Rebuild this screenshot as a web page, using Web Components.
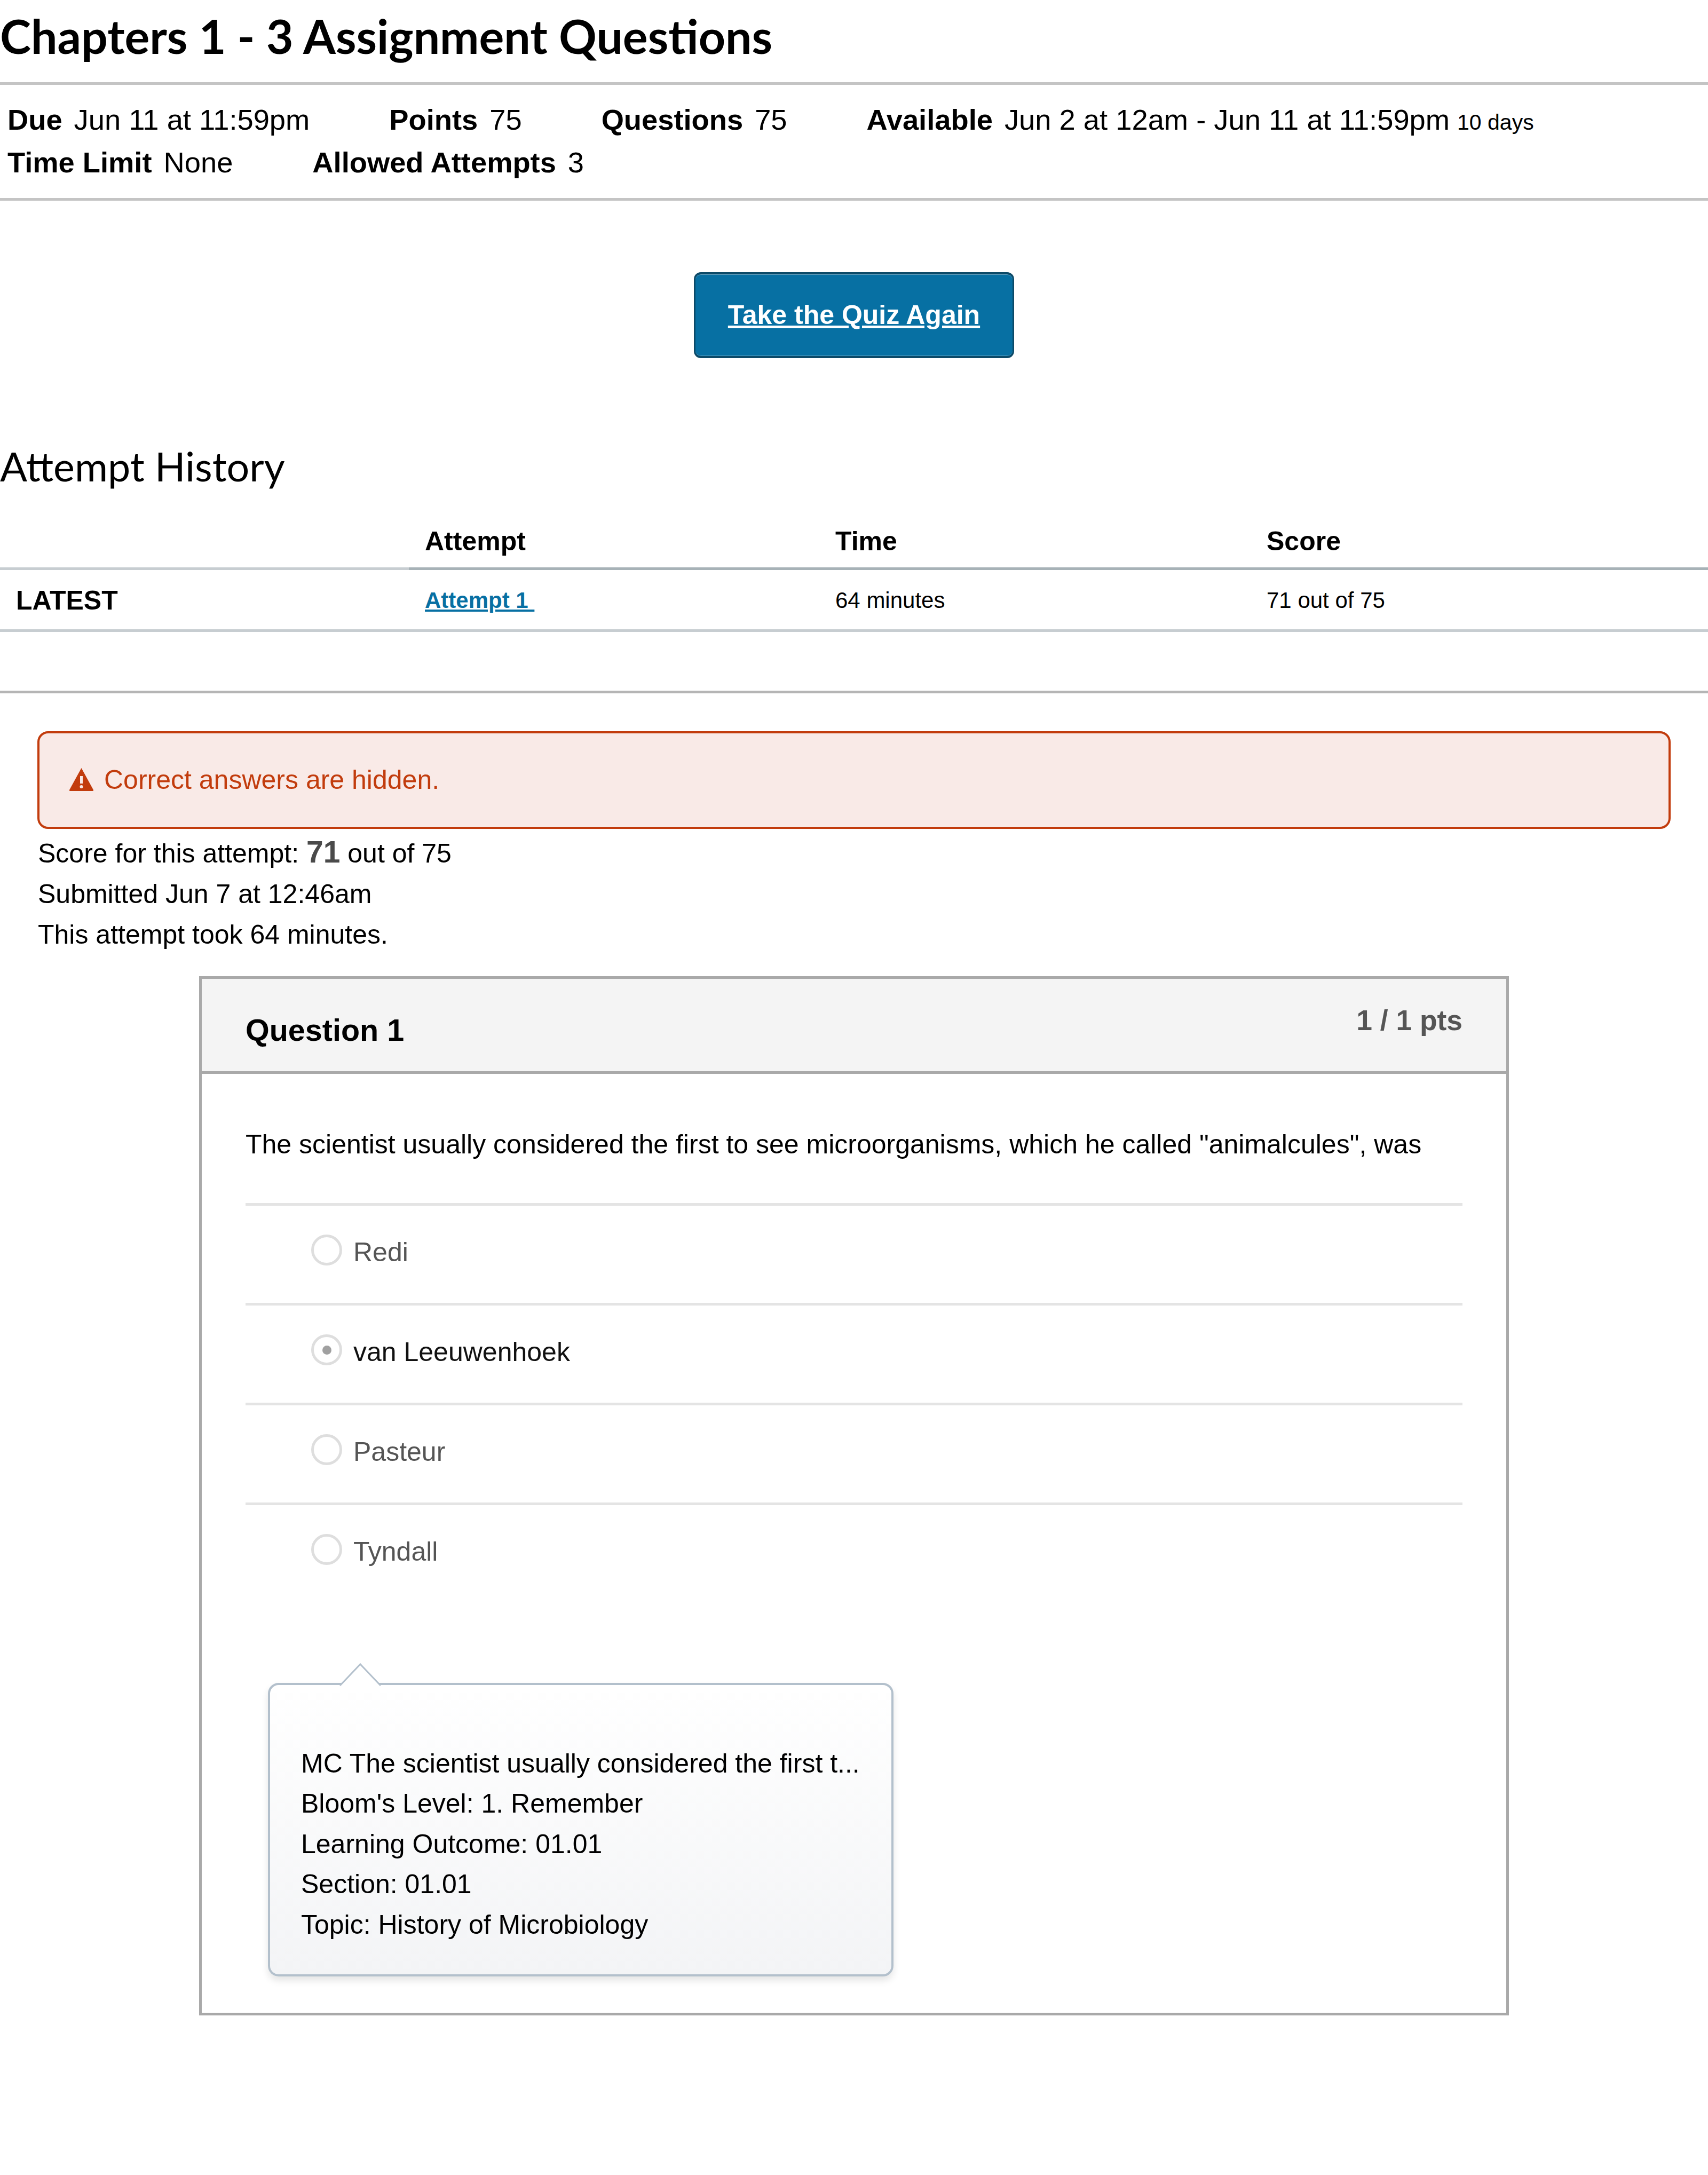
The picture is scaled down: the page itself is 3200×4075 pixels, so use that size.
<!DOCTYPE html>
<html>
<head>
<meta charset="utf-8">
<style>
  html, body { margin: 0; background: #fff; }
  body { font-family: "Liberation Sans", Arial, sans-serif; color: #000; width: 3200px; }
</style>
</head>
<body>
<quiz-header heading="Chapters 1 - 3 Assignment Questions"></quiz-header>
<quiz-action>Take the Quiz Again</quiz-action>
<attempt-history></attempt-history>
<quiz-alert>Correct answers are hidden.</quiz-alert>
<score-summary></score-summary>
<quiz-question number="1" pts="1 / 1 pts">
  <span slot="text">The scientist usually considered the first to see microorganisms, which he called "animalcules", was</span>
  <answer-option>Redi</answer-option>
  <answer-option selected>van Leeuwenhoek</answer-option>
  <answer-option>Pasteur</answer-option>
  <answer-option>Tyndall</answer-option>
  <question-comment slot="comment">
    <div>MC The scientist usually considered the first t...</div>
    <div>Bloom's Level: 1. Remember</div>
    <div>Learning Outcome: 01.01</div>
    <div>Section: 01.01</div>
    <div>Topic: History of Microbiology</div>
  </question-comment>
</quiz-question>

<script>
// helper: shadow root desde string
function mount(el, html){
  el.attachShadow({ mode: 'open' }).innerHTML = html;
}

class QuizHeader extends HTMLElement {
  connectedCallback(){
    mount(this, /* html */`
      <style>
        :host{ display:block; }
        h1{ margin:0; height:159px; padding-top:22px; box-sizing:border-box; font:700 87.7px/90px Lato, sans-serif; font-variant-ligatures:common-ligatures discretionary-ligatures; border-bottom:5px solid #c4c4c4; }
        .meta{ height:217px; box-sizing:border-box; padding:28px 14px 0; border-bottom:5px solid #c4c4c4; font-size:54.3px; line-height:75px; }
        .row{ display:flex; }
        .item{ white-space:pre; margin-right:149px; }
        b{ margin-right:22px; }
        small{ font-size:41px; margin-left:14px; }
      </style>
      <h1>${this.getAttribute('heading')}</h1>
      <div class="meta">
        <div class="row">
          <span class="item"><b>Due</b>Jun 11 at 11:59pm</span>
          <span class="item"><b>Points</b>75</span>
          <span class="item"><b>Questions</b>75</span>
          <span class="item"><b>Available</b>Jun 2 at 12am - Jun 11 at 11:59pm<small>10 days</small></span>
        </div>
        <div class="row">
          <span class="item"><b>Time Limit</b>None</span>
          <span class="item"><b>Allowed Attempts</b>3</span>
        </div>
      </div>`);
  }
}

class QuizAction extends HTMLElement {
  connectedCallback(){
    mount(this, /* html */`
      <style>
        :host{ display:flex; justify-content:center; padding-top:134px; }
        a{ display:flex; align-items:center; justify-content:center; box-sizing:border-box; width:600px; height:161px; padding-bottom:2px;
           background:#0770a3; border:1px solid #0c4a68; border-width:4px 3px; border-radius:13px; box-shadow:inset 0 1px 0 rgba(255,255,255,.4), inset 0 -1px 0 rgba(255,255,255,.3);
           color:#fff; font-weight:700; font-size:50px; text-decoration:underline; }
      </style>
      <a href="#"><slot></slot></a>`);
  }
}

class AttemptHistory extends HTMLElement {
  connectedCallback(){
    mount(this, /* html */`
      <style>
        :host{ display:block; padding-top:152px; }
        h2{ margin:0; font:400 75.4px/100px Lato, sans-serif; height:100px; }
        .head, .row{ display:grid; grid-template-columns:766px 769px 808px 1fr; }
        .head{ height:137px; margin-top:8px; font-weight:700; font-size:50px; line-height:60px; }
        .head span{ display:flex; align-items:flex-end; padding:0 0 19px 30px; border-bottom:5px solid #a7b2b7; }
        .head span:first-child{ border-bottom-color:#c7cdd1; }
        .row{ height:116px; padding-top:2px; align-items:center; font-size:42px; border-bottom:5px solid #c7cdd1; box-sizing:border-box; }
        .row span{ padding-left:30px; }
        .row .latest{ font-weight:700; font-size:50px; }
        a{ color:#0770a3; font-weight:700; text-decoration:underline; white-space:pre; }
        hr{ margin:110px 0 0; border:0; border-top:5px solid #b5b5b5; }
      </style>
      <h2>Attempt History</h2>
      <div class="head"><span></span><span>Attempt</span><span>Time</span><span>Score</span></div>
      <div class="row"><span class="latest">LATEST</span><span><a href="#">Attempt 1 </a></span><span>64 minutes</span><span>71 out of 75</span></div>
      <hr>`);
  }
}

class QuizAlert extends HTMLElement {
  connectedCallback(){
    mount(this, /* html */`
      <style>
        :host{ display:block; margin:71px 70px 0; }
        .box{ display:flex; align-items:center; gap:20px; box-sizing:border-box; height:183px; padding:0 56px 2px; background:#f9eae7; border:4px solid #c23c0d; border-radius:20px; color:#c23c0d; font-size:50px; }
        svg{ width:45px; height:43px; flex:none; }
      </style>
      <div class="box">
        <svg viewBox="0 0 45 43"><path d="M22.5 0 L45 41 a1.5 1.5 0 0 1 -1.5 2 H1.5 a1.5 1.5 0 0 1 -1.5 -2 Z" fill="#c23c0d"/><rect x="20" y="15" width="5" height="14" fill="#f9eae7"/><circle cx="22.5" cy="35" r="3" fill="#f9eae7"/></svg>
        <span><slot></slot></span>
      </div>`);
  }
}

class ScoreSummary extends HTMLElement {
  connectedCallback(){
    mount(this, /* html */`
      <style>
        :host{ display:block; margin:5px 70px 0 71px; font-size:50px; line-height:76px; }
        b{ font-size:57px; color:#4a4a4a; }
      </style>
      <div>Score for this attempt: <b>71</b> out of 75</div>
      <div>Submitted Jun 7 at 12:46am</div>
      <div>This attempt took 64 minutes.</div>`);
  }
}

class QuizQuestion extends HTMLElement {
  connectedCallback(){
    mount(this, /* html */`
      <style>
        :host{ display:block; box-sizing:border-box; width:2454px; height:1947px; margin:40px 0 0 373px; border:5px solid #a9a9a9; }
        header{ display:flex; justify-content:space-between; height:178px; box-sizing:border-box; padding:0 82px; background:#f4f4f4; border-bottom:5px solid #a9a9a9; }
        .title{ font-weight:700; font-size:57.5px; line-height:192px; }
        .pts{ font-weight:700; font-size:53.4px; color:#555; line-height:156px; }
        .text{ margin:0 82px; height:242px; box-sizing:border-box; padding-top:94px; font-size:50px; line-height:76px; }
        .answers{ margin:0 82px; }
        .comment{ margin:0 0 0 124px; }
      </style>
      <header><span class="title">Question ${this.getAttribute('number')}</span><span class="pts">${this.getAttribute('pts')}</span></header>
      <div class="text"><slot name="text"></slot></div>
      <div class="answers"><slot></slot></div>
      <div class="comment"><slot name="comment"></slot></div>`);
  }
}

class AnswerOption extends HTMLElement {
  connectedCallback(){
    const on = this.hasAttribute('selected');
    mount(this, /* html */`
      <style>
        :host{ display:block; box-sizing:border-box; height:187px; border-top:5px solid #e4e4e4; }
        .row{ display:flex; align-items:center; gap:21px; height:174px; padding-left:123px; font-size:50px; color:${on ? '#111' : '#555'}; }
        .dot{ position:relative; width:58px; height:58px; box-sizing:border-box; flex:none; border-radius:50%; background:#fff; border:5px solid #dedede; margin-top:-8px; filter:blur(.7px); }
        .dot.on::after{ content:''; position:absolute; left:50%; top:50%; width:17px; height:17px; margin:-8.5px; border-radius:50%; background:#a0a0a0; }
      </style>
      <div class="row"><span class="dot ${on ? 'on' : ''}"></span><span><slot></slot></span></div>`);
  }
}

class QuestionComment extends HTMLElement {
  connectedCallback(){
    mount(this, /* html */`
      <style>
        :host{ display:block; position:relative; box-sizing:border-box; width:1172px; height:550px; margin-top:151px; padding:110px 58px 0; font-size:50px; line-height:75.4px;
               background:linear-gradient(#fff, #f3f4f6); border:4px solid #b3c0cc; border-radius:20px; box-shadow:0 8px 14px rgba(0,0,0,.1); }
        svg{ position:absolute; left:129px; top:-41px; width:80px; height:45px; }
      </style>
      <svg viewBox="0 0 80 45"><path d="M2 41 L40 2 L78 41 V45 H2 Z" fill="#fff"/><path d="M2 42 L40 2 L78 42" fill="none" stroke="#b3c0cc" stroke-width="3"/></svg>
      <slot></slot>`);
  }
}

customElements.define('quiz-header', QuizHeader);
customElements.define('quiz-action', QuizAction);
customElements.define('attempt-history', AttemptHistory);
customElements.define('quiz-alert', QuizAlert);
customElements.define('score-summary', ScoreSummary);
customElements.define('quiz-question', QuizQuestion);
customElements.define('answer-option', AnswerOption);
customElements.define('question-comment', QuestionComment);
</script>
</body>
</html>
